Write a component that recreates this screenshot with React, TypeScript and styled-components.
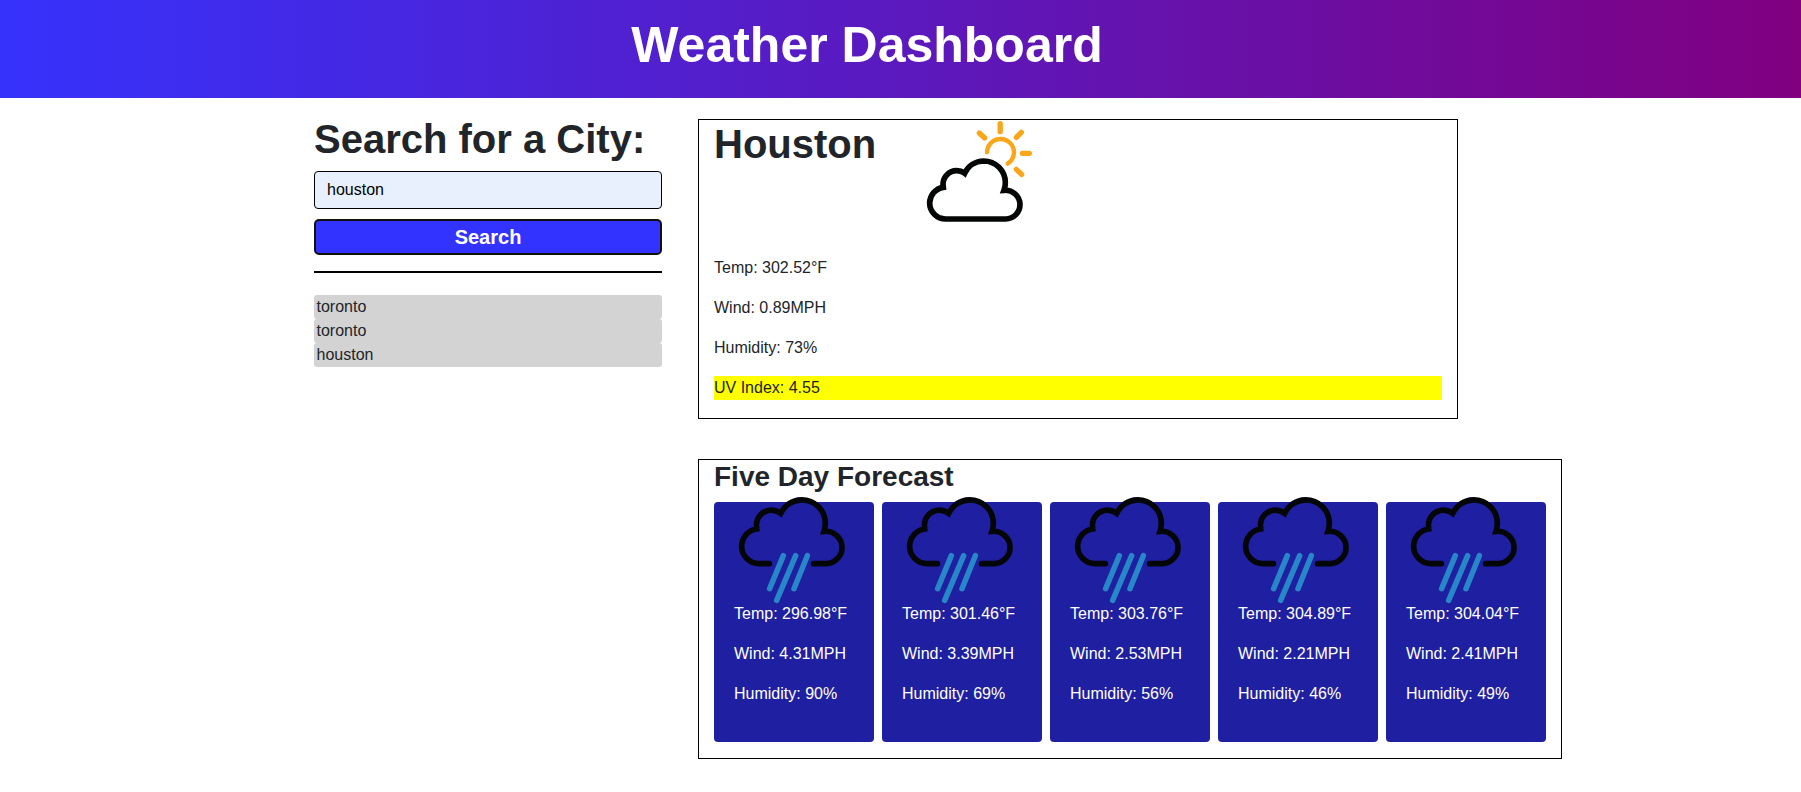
import React from "react";
import styled, { createGlobalStyle } from "styled-components";

const GlobalStyle = createGlobalStyle`
  *, *::before, *::after { box-sizing: border-box; }
  body {
    margin: 0;
    background: #fff;
    color: #212529;
    font-family: "Liberation Sans", Arial, sans-serif;
    font-size: 16px;
    line-height: 24px;
  }
`;

const Header = styled.header`
  height: 98px;
  padding: 15px 67px 0 0;
  background: linear-gradient(to right, #3632fc, #800080);
  color: #fff;
  text-align: center;
`;

const Title = styled.h1`
  margin: 0;
  font-size: 50px;
  line-height: 60px;
`;

const Page = styled.main`
  display: flex;
  align-items: flex-start;
  gap: 36px;
  padding: 17px 0 0 314px;
`;

const Sidebar = styled.aside`
  width: 348px;
`;

const Heading = styled.h2`
  margin: 0;
  font-size: 40px;
  line-height: 48px;
`;

const SearchForm = styled.form`
  display: flex;
  flex-direction: column;
  gap: 10px;
  margin: 8px 0 16px;
`;

const CityInput = styled.input`
  height: 38px;
  padding: 6px 12px;
  border: 1px solid #000;
  border-radius: 4px;
  background: #e8f0fe;
  color: #000;
  font: inherit;
`;

const SearchButton = styled.button`
  height: 36px;
  padding: 0;
  border: 2px solid #111;
  border-radius: 5px;
  background: #3333ff;
  color: #fff;
  font: bold 20px/30px "Liberation Sans", Arial, sans-serif;
`;

const Divider = styled.hr`
  height: 2px;
  margin: 0 0 22px;
  border: 0;
  background: #000;
`;

const History = styled.ul`
  margin: 0;
  padding: 0;
  list-style: none;
`;

const HistoryItem = styled.li`
  padding-left: 2.5px;
  border-radius: 3px;
  background: lightgray;
`;

const Results = styled.div`
  display: flex;
  flex-direction: column;
  gap: 40px;
  padding-top: 4px;
`;

const Panel = styled.section<{ $width: number }>`
  width: ${(p) => p.$width}px;
  height: 300px;
  padding: 0 15px;
  border: 1px solid #000;
`;

const CurrentTop = styled.div`
  display: flex;
  align-items: flex-start;
  gap: 50px;
  height: 136px;
`;

const Reading = styled.p<{ $highlight?: boolean }>`
  margin: 0 0 16px;
  background: ${(p) => (p.$highlight ? "yellow" : "transparent")};
`;

const ForecastHeading = styled.h3`
  margin: 0 0 8px;
  font-size: 28px;
  line-height: 34px;
`;

const Cards = styled.div`
  display: flex;
  gap: 8px;
`;

const Card = styled.article`
  width: 160px;
  height: 240px;
  padding: 0 20px;
  border-radius: 4px;
  background: #1f1fa1;
  color: #fff;
`;

const SunIcon = styled.svg`
  display: block;
  width: 150px;
  height: 125px;
  margin: -10px 0 0 -26px;
`;

const RainIcon = styled.svg`
  display: block;
  width: 140px;
  height: 120px;
  margin: -17px 0 -3px -14px;
`;

const PartlyCloudy = () => (
  <SunIcon viewBox="0 0 450 375" fill="none">
    <g stroke="#f9a61a" strokeLinecap="round">
      <path strokeWidth="13" d="M261 127A40.500 40.500 0 0 1 342 128A41 41 0 0 1 323 161" />
      <path
        strokeWidth="16"
        d="M300.500 41V65M238 69L254 84M364 67L349 82M367 130H388M349 178L365 193"
      />
    </g>
    <path
      stroke="#040606"
      strokeWidth="17"
      d="M137 327A48 48 0 0 1 89 279A48 48 0 0 1 130 232L129 223A41 41 0 0 1 170 182A41 41 0 0 1 194 190A65 65 0 0 1 251 153A65 65 0 0 1 316 218Q316 230 312 241A43.500 43.500 0 0 1 360 283A43.500 43.500 0 0 1 317 327Z"
    />
  </SunIcon>
);

const Rain = () => (
  <RainIcon viewBox="0 0 420 360" fill="none" strokeLinecap="round">
    <path
      stroke="#040606"
      strokeWidth="17"
      d="M148 236H117A52 52 0 0 1 65 184A52 52 0 0 1 110 132L109.500 120A44.500 44.500 0 0 1 154 75.500A44.500 44.500 0 0 1 182 85A71 71 0 0 1 244 44.500A71 71 0 0 1 316 115Q316 127 312 139A49 49 0 0 1 366 187A49 49 0 0 1 318 236H281"
    />
    <path stroke="#2787c9" strokeWidth="16.500" d="M190 212L149 311M227 212L170 346M262 212L222 311" />
  </RainIcon>
);

const searches = ["toronto", "toronto", "houston"];

const forecast = [
  { temp: "296.98", wind: "4.31", humidity: 90 },
  { temp: "301.46", wind: "3.39", humidity: 69 },
  { temp: "303.76", wind: "2.53", humidity: 56 },
  { temp: "304.89", wind: "2.21", humidity: 46 },
  { temp: "304.04", wind: "2.41", humidity: 49 },
];

export default function App() {
  return (
    <>
      <GlobalStyle />
      <Header>
        <Title>Weather Dashboard</Title>
      </Header>
      <Page>
        <Sidebar>
          <Heading>Search for a City:</Heading>
          <SearchForm onSubmit={(e) => e.preventDefault()}>
            <CityInput defaultValue="houston" aria-label="City" />
            <SearchButton>Search</SearchButton>
          </SearchForm>
          <Divider />
          <History>
            {searches.map((city, i) => (
              <HistoryItem key={i}>{city}</HistoryItem>
            ))}
          </History>
        </Sidebar>
        <Results>
          <Panel $width={760}>
            <CurrentTop>
              <Heading>Houston</Heading>
              <PartlyCloudy />
            </CurrentTop>
            <Reading>Temp: 302.52°F</Reading>
            <Reading>Wind: 0.89MPH</Reading>
            <Reading>Humidity: 73%</Reading>
            <Reading $highlight>UV Index: 4.55</Reading>
          </Panel>
          <Panel $width={864}>
            <ForecastHeading>Five Day Forecast</ForecastHeading>
            <Cards>
              {forecast.map((day) => (
                <Card key={day.temp}>
                  <Rain />
                  <Reading>Temp: {day.temp}°F</Reading>
                  <Reading>Wind: {day.wind}MPH</Reading>
                  <Reading>Humidity: {day.humidity}%</Reading>
                </Card>
              ))}
            </Cards>
          </Panel>
        </Results>
      </Page>
    </>
  );
}
